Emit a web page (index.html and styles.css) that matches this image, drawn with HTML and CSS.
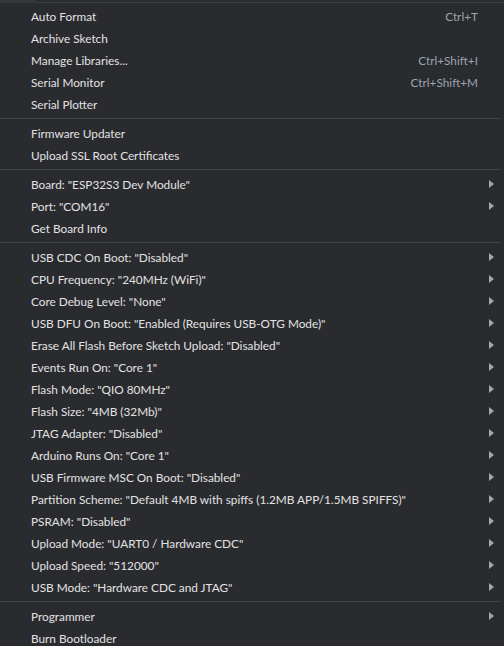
FILE: index.html
```html
<!DOCTYPE html>
<html>
<head>
<meta charset="utf-8">
<link rel="stylesheet" href="styles.css">
</head>
<body>
<div class="topbar"><div class="topbar-left"></div><div class="topbar-right"></div></div>
<div class="menu">
  <div class="item"><span class="label">Auto Format</span><span class="key">Ctrl+T</span></div>
  <div class="item"><span class="label">Archive Sketch</span></div>
  <div class="item"><span class="label">Manage Libraries...</span><span class="key">Ctrl+Shift+I</span></div>
  <div class="item"><span class="label">Serial Monitor</span><span class="key">Ctrl+Shift+M</span></div>
  <div class="item"><span class="label">Serial Plotter</span></div>
  <div class="sep"></div>
  <div class="item"><span class="label">Firmware Updater</span></div>
  <div class="item"><span class="label">Upload SSL Root Certificates</span></div>
  <div class="sep"></div>
  <div class="item sub"><span class="label">Board: "ESP32S3 Dev Module"</span><span class="arrow"></span></div>
  <div class="item sub"><span class="label">Port: "COM16"</span><span class="arrow"></span></div>
  <div class="item"><span class="label">Get Board Info</span></div>
  <div class="sep"></div>
  <div class="item sub"><span class="label">USB CDC On Boot: "Disabled"</span><span class="arrow"></span></div>
  <div class="item sub"><span class="label">CPU Frequency: "240MHz (WiFi)"</span><span class="arrow"></span></div>
  <div class="item sub"><span class="label">Core Debug Level: "None"</span><span class="arrow"></span></div>
  <div class="item sub"><span class="label">USB DFU On Boot: "Enabled (Requires USB-OTG Mode)"</span><span class="arrow"></span></div>
  <div class="item sub"><span class="label">Erase All Flash Before Sketch Upload: "Disabled"</span><span class="arrow"></span></div>
  <div class="item sub"><span class="label">Events Run On: "Core 1"</span><span class="arrow"></span></div>
  <div class="item sub"><span class="label">Flash Mode: "QIO 80MHz"</span><span class="arrow"></span></div>
  <div class="item sub"><span class="label">Flash Size: "4MB (32Mb)"</span><span class="arrow"></span></div>
  <div class="item sub"><span class="label">JTAG Adapter: "Disabled"</span><span class="arrow"></span></div>
  <div class="item sub"><span class="label">Arduino Runs On: "Core 1"</span><span class="arrow"></span></div>
  <div class="item sub"><span class="label">USB Firmware MSC On Boot: "Disabled"</span><span class="arrow"></span></div>
  <div class="item sub"><span class="label">Partition Scheme: "Default 4MB with spiffs (1.2MB APP/1.5MB SPIFFS)"</span><span class="arrow"></span></div>
  <div class="item sub"><span class="label">PSRAM: "Disabled"</span><span class="arrow"></span></div>
  <div class="item sub"><span class="label">Upload Mode: "UART0 / Hardware CDC"</span><span class="arrow"></span></div>
  <div class="item sub"><span class="label">Upload Speed: "512000"</span><span class="arrow"></span></div>
  <div class="item sub"><span class="label">USB Mode: "Hardware CDC and JTAG"</span><span class="arrow"></span></div>
  <div class="sep"></div>
  <div class="item sub"><span class="label">Programmer</span><span class="arrow"></span></div>
  <div class="item"><span class="label">Burn Bootloader</span></div>
</div>
</body>
</html>
```
FILE: styles.css
```css
html, body {
  margin: 0;
  padding: 0;
  background: #2a2b2f;
  overflow: hidden;
}
body {
  width: 504px;
  height: 646px;
  font-family: Lato, "Noto Sans", sans-serif;
  font-size: 11.8px;
  color: #e2e2e2;
}
.topbar {
  display: flex;
  height: 3px;
}
.topbar-left {
  width: 36px;
  background: #35363a;
}
.topbar-right {
  flex: 1;
  border-bottom: 1px solid #3e3f43;
}
.menu {
  width: 501px;
  padding-top: 2px;
}
.item {
  display: flex;
  align-items: center;
  height: 22px;
  padding-left: 31px;
  padding-right: 23px;
}
.label {
  flex: 1;
  white-space: nowrap;
}
.key {
  color: #9ba5b0;
  white-space: nowrap;
}
.item.sub {
  padding-right: 7px;
}
.arrow {
  width: 0;
  height: 0;
  border-top: 4px solid transparent;
  border-bottom: 4px solid transparent;
  border-left: 5px solid #a4a6aa;
}
.sep {
  height: 1px;
  background: #434448;
  margin: 3px 0;
}
```
